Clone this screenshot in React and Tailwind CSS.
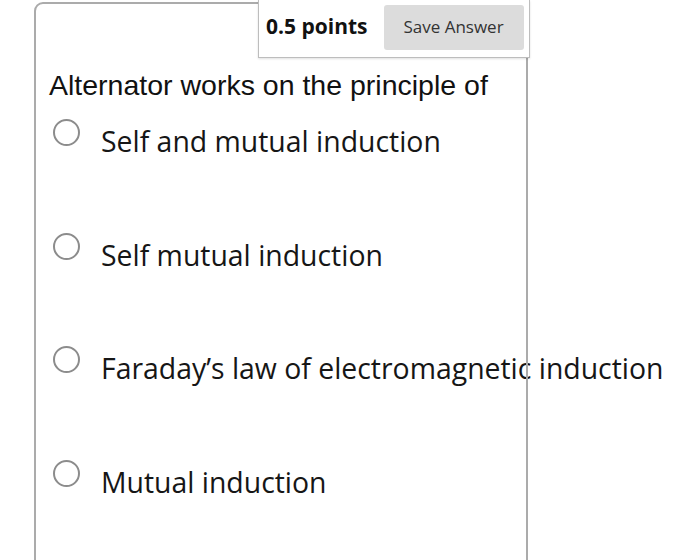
import React from "react";

const options = [
  "Self and mutual induction",
  "Self mutual induction",
  "Faraday\u2019s law of electromagnetic induction",
  "Mutual induction",
];

const App = () => {
  return (
    <div className="w-[700px] h-[560px] overflow-hidden bg-white relative">
      {/* question card */}
      <div className="relative ml-[34px] mt-[2px] w-[494px] h-[620px] rounded-tl-[9px] rounded-tr-[4px]">
        <div className="pt-[68px] pl-[15px]">
          <p className="text-[28.5px] leading-[30px] text-[#111] font-['Liberation_Sans',Arial,sans-serif]">
            Alternator works on the principle of
          </p>

          <div className="flex flex-col pt-[12px]">
            {options.map((opt) => (
              <label
                key={opt}
                className="flex items-start h-[113.5px] font-['Open_Sans',sans-serif] cursor-pointer"
              >
                <span className="mt-[7px] ml-[4px] w-[27px] h-[27px] rounded-full border-2 border-[#8c8c8c] bg-white shrink-0" />
                <span className="ml-[21px] mt-[9px] text-[28.4px] leading-[40px] text-[#161616] whitespace-nowrap">
                  {opt}
                </span>
              </label>
            ))}
          </div>
        </div>

        {/* border drawn over content (third option overflows it) */}
        <div className="absolute inset-0 border-2 border-[#ababab] rounded-tl-[9px] rounded-tr-[4px] pointer-events-none" />
      </div>

      {/* points box */}
      <div className="absolute left-[258px] top-0 w-[272px] h-[58px] bg-white border border-t-0 border-[#bdbdbd] shadow-[0_1px_2px_rgba(0,0,0,0.12)] flex items-center pl-[7px] font-['Open_Sans',sans-serif]">
        <span className="text-[21px] font-bold text-[#111] mt-[-4px]">0.5 points</span>
        <button className="ml-[16px] mt-[-3px] w-[140px] h-[45px] rounded-[3px] bg-[#dcdcdc] text-[17px] text-[#333]">
          Save Answer
        </button>
      </div>
    </div>
  );
};

export default App;
